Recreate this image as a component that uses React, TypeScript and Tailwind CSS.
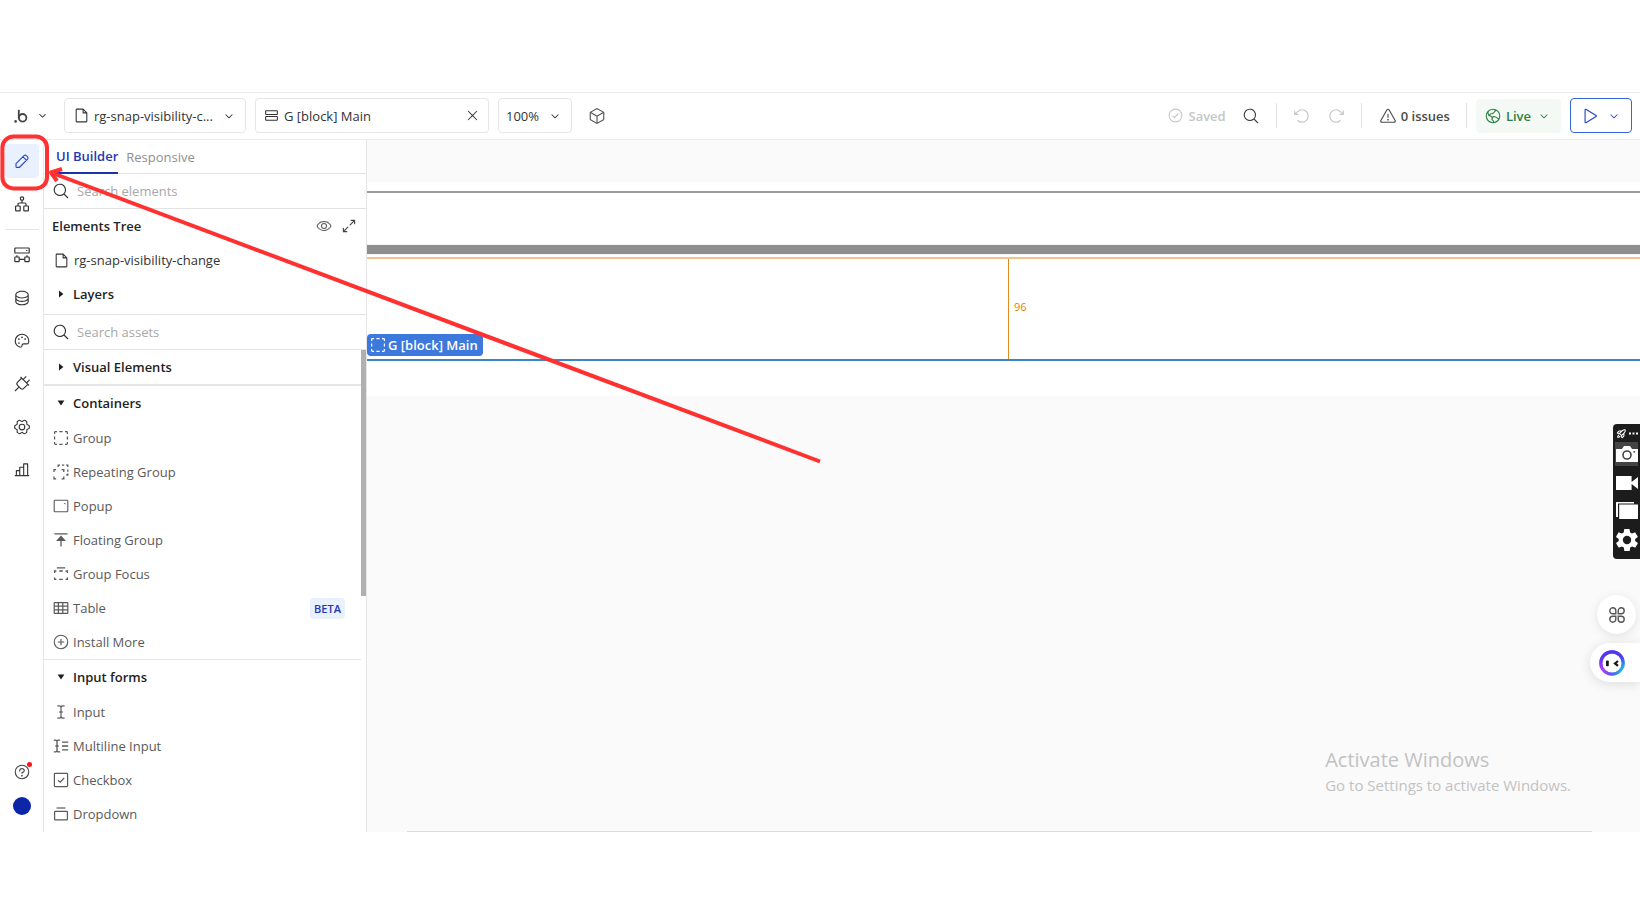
import { useState } from "react";
import type { ReactNode } from "react";
import {
  PiArrowClockwise,
  PiArrowCounterClockwise,
  PiArrowsOutSimple,
  PiCaretDownBold,
  PiChartBar,
  PiCheckCircle,
  PiCube,
  PiDatabase,
  PiEye,
  PiFile,
  PiGearSix,
  PiGlobeHemisphereWest,
  PiMagnifyingGlass,
  PiPalette,
  PiPlay,
  PiPlug,
  PiPlusCircle,
  PiQuestion,
  PiRocketLaunchBold,
  PiRows,
  PiWarning,
  PiX,
} from "react-icons/pi";

const strokeProps = {
  width: 16,
  height: 16,
  viewBox: "0 0 16 16",
  fill: "none",
  stroke: "currentColor",
};

const PencilIcon = () => (
  <svg {...strokeProps} strokeWidth="1.1" strokeLinejoin="round">
    <path d="M2 14 2 10.6 10 2.6Q11.2 1.6 12.4 2.6L13.6 3.8Q14.6 5 13.6 6.2L5.8 14Q5.4 14.4 4.8 14.4H2.6Q2 14.4 2 13.8ZM9 3.8l3.6 3.6" />
  </svg>
);

const WorkflowIcon = () => (
  <svg {...strokeProps} strokeWidth="1.2">
    <circle cx="8" cy="2.6" r="1.7" />
    <path d="M8 4.4v2.4M4 10V8.2Q4 7 5.2 7h5.6Q12 7 12 8.2V10" />
    <rect x="1.6" y="10" width="4.6" height="4.8" rx="0.6" />
    <rect x="9.8" y="10" width="4.6" height="4.8" rx="0.6" />
  </svg>
);

const BackendIcon = () => (
  <svg {...strokeProps} strokeWidth="1.2">
    <rect x="0.8" y="1" width="14.4" height="5" rx="0.6" />
    <rect x="0.8" y="10" width="4.4" height="4.6" rx="0.6" />
    <rect x="10.8" y="10" width="4.4" height="4.6" rx="0.6" />
    <path d="M5.2 12.3h5.6M3 10V8.2M13 10V8.2M12 3.5h1.4" />
  </svg>
);

const GroupIcon = () => (
  <svg {...strokeProps} strokeWidth="1.2">
    <path d="M1.6 4V2.4q0-.8.8-.8H4M12 1.6h1.6q.8 0 .8.8V4M14.4 12v1.6q0 .8-.8.8H12M4 14.4H2.4q-.8 0-.8-.8V12M6.4 1.6h3.2M6.4 14.4h3.2M1.6 6.4v3.2M14.4 6.4v3.2" />
  </svg>
);

const RepeatingGroupIcon = () => (
  <svg {...strokeProps} strokeWidth="1.3">
    <path d="M5.2 3V1.2H7M9 1.2h2.2M13.2 1.2h1.6V3M14.8 5.4v2.4M14.8 9.6v1.4h-1.6M1 8V5.6h2M8.6 5.6h2.2V8M10.8 12.6v2.200H8.600M3.200 14.800H1v-2.200" />
  </svg>
);

const PopupIcon = () => (
  <svg {...strokeProps} strokeWidth="1.1">
    <rect x="1.2" y="2.2" width="13.6" height="11.6" rx="0.8" />
    <path d="M10.6 5h1.8v1.8z" fill="currentColor" stroke="none" />
  </svg>
);

const FloatingGroupIcon = () => (
  <svg {...strokeProps} strokeWidth="1.3">
    <path d="M1.4 1.8h13.2M8 8v6.6" />
    <path d="M8 3.6 13 9H3z" fill="currentColor" stroke="none" />
  </svg>
);

const GroupFocusIcon = () => (
  <svg {...strokeProps} strokeWidth="1.3">
    <path d="M3.8 1.8h8.4M1.6 7V5h1.8M6.200 5h3.600M12.6 5h1.8v2M14.4 11.400v2h-1.8M9.800 13.4H6.200M3.4 13.4H1.6v-2" />
  </svg>
);

const TableIcon = () => (
  <svg {...strokeProps} strokeWidth="1.2">
    <rect x="1.2" y="2.6" width="13.6" height="10.8" rx="0.4" />
    <path d="M1.2 6.2h13.6M1.2 9.8h13.6M5.4 2.6v10.8M9.8 2.6v10.8" />
  </svg>
);

const InputIcon = () => (
  <svg {...strokeProps} strokeWidth="1.2">
    <path d="M4.400 1.800h1.800q1.800 0 1.800 1.600v9.200q0 1.600-1.800 1.600H4.400M11.600 1.800H9.800Q8 1.800 8 3.400M11.600 14.200H9.800Q8 14.200 8 12.600M6 8h4" />
  </svg>
);

const MultilineIcon = () => (
  <svg {...strokeProps} strokeWidth="1.3">
    <path d="M.8 2.2h1.6q1.6 0 1.6 1.4v8.8q0 1.4-1.6 1.4H.8M7.2 2.2H5.6Q4 2.2 4 3.6M7.2 13.8H5.6Q4 13.8 4 12.4M2.4 8h3.2M9 4.2h6.2M9 8h6.2M9 11.8h6.2" />
  </svg>
);

const CheckboxIcon = () => (
  <svg {...strokeProps} strokeWidth="1.2">
    <rect x="1.4" y="1.4" width="13.2" height="13.2" rx="0.8" />
    <path d="m5 8.2 2.2 2 4-4.2" />
  </svg>
);

const DropdownIcon = () => (
  <svg {...strokeProps} strokeWidth="1.2">
    <path d="M3.6 2h8.8" />
    <rect x="1.6" y="5.4" width="12.8" height="8.4" rx="0.6" />
  </svg>
);

const Triangle = ({ open = false }: { open?: boolean }) => (
  <svg width="8" height="8" viewBox="0 0 8 8" fill="currentColor">
    {open ? <path d="M.6 1.600h6.800L4 6.4z" /> : <path d="M2 .6v6.800l4.400-3.400z" />}
  </svg>
);

const CameraIcon = () => (
  <svg width="22" height="16" viewBox="0 0 22 16">
    <path d="M0 3h6l2-3h6l2 3h6v13H0z" fill="#fff" />
    <circle cx="11" cy="9" r="4" fill="none" stroke="#444" strokeWidth="1.6" />
    <circle cx="18.2" cy="5.8" r="0.9" fill="#444" />
  </svg>
);

const VideoIcon = () => (
  <svg width="22" height="14" viewBox="0 0 22 14" fill="#fff">
    <path d="M0 0h15.6v14H0zM15.6 6 22 1v12l-6.4-5z" />
  </svg>
);

const StackIcon = () => (
  <svg width="22" height="17" viewBox="0 0 22 17" fill="#fff">
    <path d="M0 0h18v1.6H2V15H0zM3.2 2.6H22V17H3.2z" />
  </svg>
);

const CogIcon = () => (
  <svg width="22" height="22" viewBox="2 2 20 20" fill="#fff">
    <path d="M19.4 13a7.5 7.5 0 0 0 0-2l2.1-1.6c.2-.2.3-.4.1-.7l-2-3.4c-.1-.2-.4-.3-.6-.2l-2.5 1a7.3 7.3 0 0 0-1.7-1l-.4-2.6c0-.3-.2-.5-.5-.5h-4c-.2 0-.4.2-.5.5L9 5.100a7.300 7.300 0 0 0-1.700 1l-2.500-1c-.2-.1-.5 0-.6.2l-2 3.400c-.1.200-.1.500.1.700L4.500 11a7.500 7.500 0 0 0 0 2l-2.100 1.600c-.2.2-.3.4-.1.700l2 3.400c.1.200.4.300.6.200l2.500-1a7.300 7.300 0 0 0 1.700 1l.4 2.600c0 .3.200.5.500.5h4c.2 0 .4-.2.500-.5l.4-2.600a7.300 7.300 0 0 0 1.700-1l2.500 1c.2.100.5 0 .6-.2l2-3.400c.1-.2.100-.5-.1-.7zM12 15.800a3.800 3.800 0 1 1 0-7.600 3.800 3.800 0 0 1 0 7.600z" />
  </svg>
);

const CloverIcon = () => (
  <svg {...strokeProps} strokeWidth="1.4">
    <path d="M6.8 6.8H3.8A3 3 0 1 1 6.8 3.8zM9.2 6.8V3.8A3 3 0 1 1 12.2 6.8zM6.8 9.2V12.2A3 3 0 1 1 3.8 9.2zM9.2 9.2H12.2A3 3 0 1 1 9.2 12.2z" />
  </svg>
);

const BotIcon = () => (
  <svg width="26" height="26" viewBox="0 0 26 26">
    <defs>
      <linearGradient id="bot-ring" x1="0" y1="0.9" x2="1" y2="0.9">
        <stop offset="0.1" stopColor="#b23cf0" />
        <stop offset="0.5" stopColor="#4a5cf5" />
        <stop offset="1" stopColor="#1fc4e0" />
      </linearGradient>
      <linearGradient id="bot-shade" x1="0" y1="0" x2="0" y2="1">
        <stop offset="0.2" stopColor="#5236f5" />
        <stop offset="0.8" stopColor="#5236f5" stopOpacity="0" />
      </linearGradient>
    </defs>
    <circle cx="13" cy="13" r="11.2" fill="#fff" stroke="url(#bot-ring)" strokeWidth="3.2" />
    <circle cx="13" cy="13" r="11.2" fill="none" stroke="url(#bot-shade)" strokeWidth="3.2" />
    <rect x="7" y="10.6" width="2.8" height="5.6" rx="1" fill="#18181b" />
    <path d="m19 11-3 2.4 3 2.4" fill="none" stroke="#18181b" strokeWidth="2.2" />
  </svg>
);

type NavItem = { label: string; icon: ReactNode };

const primaryNav: NavItem[] = [
  { label: "Design", icon: <PencilIcon /> },
  { label: "Workflow", icon: <WorkflowIcon /> },
];

const secondaryNav: NavItem[] = [
  { label: "Backend workflows", icon: <BackendIcon /> },
  { label: "Data", icon: <PiDatabase size={18} /> },
  { label: "Styles", icon: <PiPalette size={18} /> },
  { label: "Plugins", icon: <PiPlug size={18} /> },
  { label: "Settings", icon: <PiGearSix size={18} /> },
  { label: "Logs", icon: <PiChartBar size={18} /> },
];

const containers = [
  { label: "Group", icon: <GroupIcon /> },
  { label: "Repeating Group", icon: <RepeatingGroupIcon /> },
  { label: "Popup", icon: <PopupIcon /> },
  { label: "Floating Group", icon: <FloatingGroupIcon /> },
  { label: "Group Focus", icon: <GroupFocusIcon /> },
  { label: "Table", icon: <TableIcon />, beta: true },
  { label: "Install More", icon: <PiPlusCircle size={18} /> },
];

const inputForms = [
  { label: "Input", icon: <InputIcon /> },
  { label: "Multiline Input", icon: <MultilineIcon /> },
  { label: "Checkbox", icon: <CheckboxIcon /> },
  { label: "Dropdown", icon: <DropdownIcon /> },
];

const NavButton = ({
  item,
  active,
  onClick,
}: {
  item: NavItem;
  active: boolean;
  onClick: () => void;
}) => (
  <button
    aria-label={item.label}
    onClick={onClick}
    className={`flex size-[34px] shrink-0 items-center justify-center rounded ${
      active ? "bg-[#e9f1fe] text-[#2b45c4]" : "text-[#333]"
    }`}
  >
    {item.icon}
  </button>
);

const SearchField = ({
  id,
  label,
  value,
  onChange,
}: {
  id: string;
  label: string;
  value: string;
  onChange: (v: string) => void;
}) => (
  <div className="flex h-[35px] shrink-0 items-center gap-[7px] border-b border-[#e2e2e2] pl-2">
    <label htmlFor={id} aria-label={label} className="text-[#333]">
      <PiMagnifyingGlass size={18} />
    </label>
    <input
      id={id}
      value={value}
      placeholder={label}
      onChange={(e) => onChange(e.target.value)}
      className="w-full min-w-0 bg-transparent outline-none placeholder:text-[#a8a8a8]"
    />
  </div>
);

const AssetRow = ({
  label,
  icon,
  beta,
}: {
  label: string;
  icon: ReactNode;
  beta?: boolean;
}) => (
  <li>
    <button className="flex h-[34px] w-full items-center pl-2 pr-4 text-[#5a5a5a]">
      <span className="flex w-[18px] justify-center">{icon}</span>
      <span className="ml-[3px]">{label}</span>
      {beta && (
        <span className="ml-auto rounded bg-[#e9f1fe] px-1 text-[11px] leading-[21px] font-semibold text-[#2138b0]">
          BETA
        </span>
      )}
    </button>
  </li>
);

const SectionHeader = ({ label, open }: { label: string; open?: boolean }) => (
  <button
    aria-expanded={!!open}
    className="flex h-[34px] w-full shrink-0 items-center pl-2 font-semibold text-[#1f1f1f]"
  >
    <span className="flex w-[18px] justify-center">
      <Triangle open={open} />
    </span>
    <span className="ml-[3px]">{label}</span>
  </button>
);

const Divider = () => <span className="h-[25px] w-px bg-[#e2e2e2]" />;

const Toolbar = () => {
  const [zoom, setZoom] = useState("100%");

  return (
    <header className="flex h-12 shrink-0 items-center border-y border-[#ebebeb] pb-px pl-[13px] pr-2 text-[#333]">
      <button aria-label="Bubble menu" className="flex w-[51px] items-center gap-[9px]">
        {/* bubble mark */}
        <svg width="16" height="16" viewBox="0 0 16 16" fill="none" stroke="#444" strokeWidth="1.8">
          <circle cx="9.6" cy="9.8" r="3.8" />
          <path d="M5.8 1.8v8" />
          <circle cx="2.6" cy="13.4" r="1.3" fill="#444" stroke="none" />
        </svg>
        <PiCaretDownBold size={9} />
      </button>

      <div className="relative mr-[9px] flex h-[35px] w-[182px] items-center rounded border border-[#e6e6e6]">
        <PiFile size={17} className="pointer-events-none absolute left-2" />
        <select
          aria-label="Page"
          className="h-full w-full appearance-none bg-transparent pl-[29px] outline-none"
        >
          <option>rg-snap-visibility-c...</option>
        </select>
        <PiCaretDownBold size={10} className="pointer-events-none absolute right-[11px]" />
      </div>

      <div className="mr-[9px] flex h-[35px] w-[234px] items-center rounded border border-[#e6e6e6] pl-[7px] pr-2">
        <PiRows size={17} />
        <span className="ml-1">G [block] Main</span>
        <button aria-label="Clear selection" className="ml-auto">
          <PiX size={15} />
        </button>
      </div>

      <div className="relative mr-4 flex h-[35px] w-[74px] items-center rounded border border-[#e6e6e6]">
        <select
          aria-label="Zoom"
          value={zoom}
          onChange={(e) => setZoom(e.target.value)}
          className="h-full w-full appearance-none bg-transparent pl-[7px] outline-none"
        >
          <option>50%</option>
          <option>100%</option>
          <option>200%</option>
        </select>
        <PiCaretDownBold size={10} className="pointer-events-none absolute right-[11px]" />
      </div>
      <button aria-label="Components" className="text-[#555]">
        <PiCube size={18} />
      </button>

      <div className="ml-auto flex items-center">
        <span className="flex items-center gap-1 font-semibold text-[#c6c6c6]">
          <PiCheckCircle size={17} />
          Saved
        </span>
        <button aria-label="Search" className="mx-4 text-[#444]">
          <PiMagnifyingGlass size={18} />
        </button>
        <Divider />
        <button aria-label="Undo" className="ml-4 text-[#c6c6c6]">
          <PiArrowCounterClockwise size={18} />
        </button>
        <button aria-label="Redo" className="mx-4 text-[#c6c6c6]">
          <PiArrowClockwise size={18} />
        </button>
        <Divider />
        <button className="ml-[17px] mr-4 flex items-center gap-1 font-semibold text-[#4a4a4a]">
          <PiWarning size={18} />
          0 issues
        </button>
        <Divider />
        <button className="ml-[9px] flex h-[34px] items-center rounded bg-[#f4f9f5] pl-2 pr-3 font-semibold text-[#2f8045]">
          <PiGlobeHemisphereWest size={18} />
          <span className="ml-1 mr-2">Live</span>
          <PiCaretDownBold size={10} />
        </button>
        <button
          aria-label="Preview"
          className="ml-[9px] flex h-[35px] w-[62px] items-center justify-between rounded border border-[#3566e0] pl-[9px] pr-3 text-[#2b45c4]"
        >
          <PiPlay size={18} />
          <PiCaretDownBold size={10} />
        </button>
      </div>
    </header>
  );
};

const Sidebar = () => {
  const [active, setActive] = useState("Design");

  return (
    <nav className="flex w-11 shrink-0 flex-col items-center border-r border-[#e6e6e6] pt-1 pb-[17px]">
      <div className="flex flex-col gap-[9px]">
        {primaryNav.map((item) => (
          <NavButton
            key={item.label}
            item={item}
            active={active === item.label}
            onClick={() => setActive(item.label)}
          />
        ))}
      </div>
      <hr className="my-2 w-[34px] border-[#e6e6e6]" />
      <div className="flex flex-col gap-[9px]">
        {secondaryNav.map((item) => (
          <NavButton
            key={item.label}
            item={item}
            active={active === item.label}
            onClick={() => setActive(item.label)}
          />
        ))}
      </div>
      <div className="mt-auto flex flex-col items-center gap-4">
        <button aria-label="Help" className="relative text-[#444]">
          <PiQuestion size={18} />
          <span className="absolute -right-px -top-px size-[5px] rounded-full bg-[#f51616]" />
        </button>
        <button aria-label="Account" className="size-[18px] rounded-full bg-[#0b27a8]" />
      </div>
    </nav>
  );
};

const Panel = () => {
  const [elementQuery, setElementQuery] = useState("");
  const [assetQuery, setAssetQuery] = useState("");

  return (
    <aside className="flex w-[323px] shrink-0 flex-col border-r border-[#e6e6e6] text-[#262626]">
      <div className="flex h-[34px] shrink-0 border-b border-[#e2e2e2] pl-3">
        <button className="-mb-px mr-2 border-b-2 border-[#1a34ac] font-semibold text-[#1f38b4]">
          UI Builder
        </button>
        <button className="text-[#8f8f8f]">Responsive</button>
      </div>
      <SearchField
        id="search-elements"
        label="Search elements"
        value={elementQuery}
        onChange={setElementQuery}
      />
      <div className="flex h-[106px] shrink-0 flex-col border-b border-[#e2e2e2]">
        <div className="flex h-[34px] items-center px-2">
          <h2 className="font-semibold">Elements Tree</h2>
          <button aria-label="Toggle visibility" className="ml-auto mr-2 text-[#555]">
            <PiEye size={16} />
          </button>
          <button aria-label="Expand tree" className="text-[#444]">
            <PiArrowsOutSimple size={18} />
          </button>
        </div>
        <button className="flex h-[34px] items-center gap-1 pl-[9px] text-[#333]">
          <PiFile size={17} />
          rg-snap-visibility-change
        </button>
        <SectionHeader label="Layers" />
      </div>
      <SearchField
        id="search-assets"
        label="Search assets"
        value={assetQuery}
        onChange={setAssetQuery}
      />
      <div className="flex min-h-0 flex-1">
        <div className="min-w-0 flex-1 overflow-hidden">
          <SectionHeader label="Visual Elements" />
          <div className="border-t-2 border-[#e6e6e6]">
            <SectionHeader label="Containers" open />
            <ul className="pt-px">
              {containers.map((item) => (
                <AssetRow key={item.label} {...item} />
              ))}
            </ul>
          </div>
          <div className="border-t border-[#e6e6e6]">
            <SectionHeader label="Input forms" open />
            <ul className="pt-px">
              {inputForms.map((item) => (
                <AssetRow key={item.label} {...item} />
              ))}
            </ul>
          </div>
        </div>
        {/* scroll thumb */}
        <div className="w-[5px]">
          <div className="h-[51%] bg-[#b0b0b0]" />
        </div>
      </div>
    </aside>
  );
};

const Canvas = () => (
  <main className="relative flex min-w-0 flex-1 flex-col bg-[#fafafa] pt-[42px]">
    <div className="bg-white pt-[9px]">
      <div className="h-[2px] bg-[#9c9c9c]" />
      <div className="h-[51px]" />
      <div className="border-y border-[#f4f4f4]">
        <div className="h-[9px] bg-[#8e8e8e]" />
      </div>
      <div className="mt-[2px] flex h-[102px] justify-center border-t-2 border-[#f4c388] pl-[29px]">
        <div className="w-px bg-[#e38b20]" />
        <span className="ml-[5px] w-[14px] self-center pb-1 text-[11px] text-[#e07f10]">96</span>
      </div>
      <div className="h-[2px] bg-[#3a85c6]" />
      <div className="h-[35px]" />
    </div>
    {/* selected element tag */}
    <div className="absolute left-0 top-[194px] flex h-[22px] items-center gap-0.5 rounded-sm bg-[#3d78dc] pl-[3px] pr-[5px] font-semibold text-white">
      <GroupIcon />
      G [block] Main
    </div>
    <div className="absolute bottom-9 right-[69px] text-[#c2c2c2]">
      <p className="text-[20px] leading-[28px]">Activate Windows</p>
      <p className="text-[15px] leading-[22px]">Go to Settings to activate Windows.</p>
    </div>
    <div className="absolute bottom-0 left-10 right-12 h-px bg-[#dcdcdc]" />
  </main>
);

const RecorderBar = () => (
  <div className="absolute right-0 top-[332px] flex h-[135px] w-[27px] flex-col items-center rounded-l bg-[#1c1c1c] text-white">
    <div className="flex h-[18px] w-full items-center gap-[2px] pl-[3px]">
      <PiRocketLaunchBold size={11} />
      <svg width="9" height="3" viewBox="0 0 9 3" fill="#fff">
        <path d="M0 .5h2v2H0zM3.5.5h2v2h-2zM7 .5h2v2H7z" />
      </svg>
    </div>
    <button aria-label="Screenshot" className="flex h-6 w-[23px] items-center justify-center bg-[#444]">
      <CameraIcon />
    </button>
    <button aria-label="Record video" className="mt-[10px]">
      <VideoIcon />
    </button>
    <button aria-label="Gallery" className="mt-3">
      <StackIcon />
    </button>
    <button aria-label="Recorder settings" className="mt-[10px]">
      <CogIcon />
    </button>
  </div>
);

const FloatingWidgets = () => (
  <div className="absolute right-0 top-[503px] flex flex-col items-end gap-[9px]">
    <button
      aria-label="Apps"
      className="mr-1 flex size-[39px] items-center justify-center rounded-full bg-white text-[#555] shadow-[0_2px_10px_rgba(0,0,0,0.10)]"
    >
      <CloverIcon />
    </button>
    <button
      aria-label="Assistant"
      className="flex h-[39px] w-[50px] items-center rounded-l-full bg-white pl-[9px] shadow-[0_2px_12px_rgba(0,0,0,0.12)]"
    >
      <BotIcon />
    </button>
  </div>
);

// red frame round the pencil button with the arrow leading to it
const Callout = () => (
  <svg
    className="pointer-events-none absolute left-0 top-0"
    width="830"
    height="380"
    viewBox="0 0 830 380"
    fill="none"
    stroke="#ff3131"
    strokeWidth="4"
  >
    <rect x="2.4" y="44.6" width="44.600" height="51.800" rx="11" />
    <path d="M820 369.500 51 80.500" />
    <path d="M62 77 51 80.500 57 89" strokeLinejoin="round" />
  </svg>
);

const App = () => {
  return (
    <div className="flex h-screen flex-col bg-white py-[92px] font-['Open_Sans','Noto_Sans',sans-serif] text-[13px] leading-5">
      <div className="relative flex min-h-0 flex-1 flex-col overflow-hidden">
        <Toolbar />
        <div className="flex min-h-0 flex-1">
          <Sidebar />
          <Panel />
          <Canvas />
        </div>
        <RecorderBar />
        <FloatingWidgets />
        <Callout />
      </div>
    </div>
  );
};

export default App;
